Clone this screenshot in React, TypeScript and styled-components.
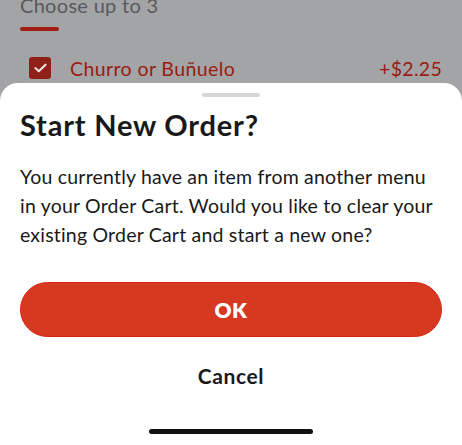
import React from "react";
import styled, { createGlobalStyle } from "styled-components";

const Global = createGlobalStyle`
  html, body { margin: 0; padding: 0; }
  body { width: 462px; height: 445px; overflow: hidden; background: #a3a4a6; }
  * { box-sizing: border-box; }
`;

const Page = styled.div`
  width: 462px;
  height: 445px;
  display: flex;
  flex-direction: column;
  font-family: Lato, "Liberation Sans", sans-serif;
  background: #a3a4a6;
`;

const Backdrop = styled.div`
  height: 83px;
  flex: none;
  overflow: hidden;
  padding: 0 20px;
`;

const SectionHint = styled.div`
  margin-top: -5px;
  font-size: 20px;
  line-height: 20px;
  letter-spacing: 0.3px;
  color: #58595c;
`;

const Underline = styled.div`
  width: 39px;
  height: 4px;
  border-radius: 2px;
  background: #a31c12;
  margin-top: 12px;
`;

const OptionRow = styled.div`
  display: flex;
  align-items: center;
  height: 22px;
  margin-top: 26px;
  padding-left: 9px;
`;

const Check = styled.div`
  width: 22px;
  height: 22px;
  border-radius: 3px;
  background: #8e2019;
  display: flex;
  align-items: center;
  justify-content: center;
  flex: none;
`;

const OptionLabel = styled.span`
  margin-left: 19px;
  font-size: 19.5px;
  letter-spacing: 0.4px;
  color: #9a1b11;
  flex: 1;
`;

const OptionPrice = styled.span`
  font-size: 19.5px;
  letter-spacing: 0.3px;
  color: #9a1b11;
`;

const Sheet = styled.div`
  flex: 1;
  background: #ffffff;
  border-radius: 18px 18px 0 0;
  display: flex;
  flex-direction: column;
  padding: 10px 20px 0;
`;

const Handle = styled.div`
  align-self: center;
  width: 58px;
  height: 4px;
  border-radius: 2px;
  background: #d6d6d6;
`;

const Title = styled.h1`
  margin: 10px 0 0;
  font-size: 29px;
  line-height: 36px;
  font-weight: 700;
  letter-spacing: 0.8px;
  color: #191919;
`;

const Body = styled.p`
  margin: 19px 0 0;
  font-size: 19.5px;
  line-height: 29px;
  letter-spacing: 0.2px;
  color: #191919;
`;

const Primary = styled.button`
  margin-top: 33px;
  height: 55px;
  width: 100%;
  border-radius: 28px;
  border: 1px solid #dc2415;
  background: #d63820;
  color: #ffffff;
  font-family: inherit;
  font-size: 21px;
  font-weight: 800;
  letter-spacing: 0.5px;
`;

const Secondary = styled.button`
  margin-top: 11px;
  height: 55px;
  width: 100%;
  border: none;
  background: transparent;
  color: #191919;
  font-family: inherit;
  font-size: 21px;
  font-weight: 700;
  letter-spacing: 0.6px;
`;

const HomeBar = styled.div`
  align-self: center;
  margin-top: auto;
  margin-bottom: 11px;
  width: 164px;
  height: 5px;
  border-radius: 3px;
  background: #111111;
`;

export default function App() {
  return (
    <>
      <Global />
      <Page>
        <Backdrop>
          <SectionHint>Choose up to 3</SectionHint>
          <Underline />
          <OptionRow>
            <Check>
              <svg width="13" height="10" viewBox="0 0 13 10">
                <path d="M1.5 5.2 L4.8 8.3 L11.5 1.7" fill="none" stroke="#ece0df" strokeWidth="2.2" strokeLinecap="round" strokeLinejoin="round" />
              </svg>
            </Check>
            <OptionLabel>Churro or Buñuelo</OptionLabel>
            <OptionPrice>+$2.25</OptionPrice>
          </OptionRow>
        </Backdrop>
        <Sheet>
          <Handle />
          <Title>Start New Order?</Title>
          <Body>
            You currently have an item from another menu in your Order Cart. Would you like to clear your existing Order Cart and start a new one?
          </Body>
          <Primary>OK</Primary>
          <Secondary>Cancel</Secondary>
          <HomeBar />
        </Sheet>
      </Page>
    </>
  );
}
